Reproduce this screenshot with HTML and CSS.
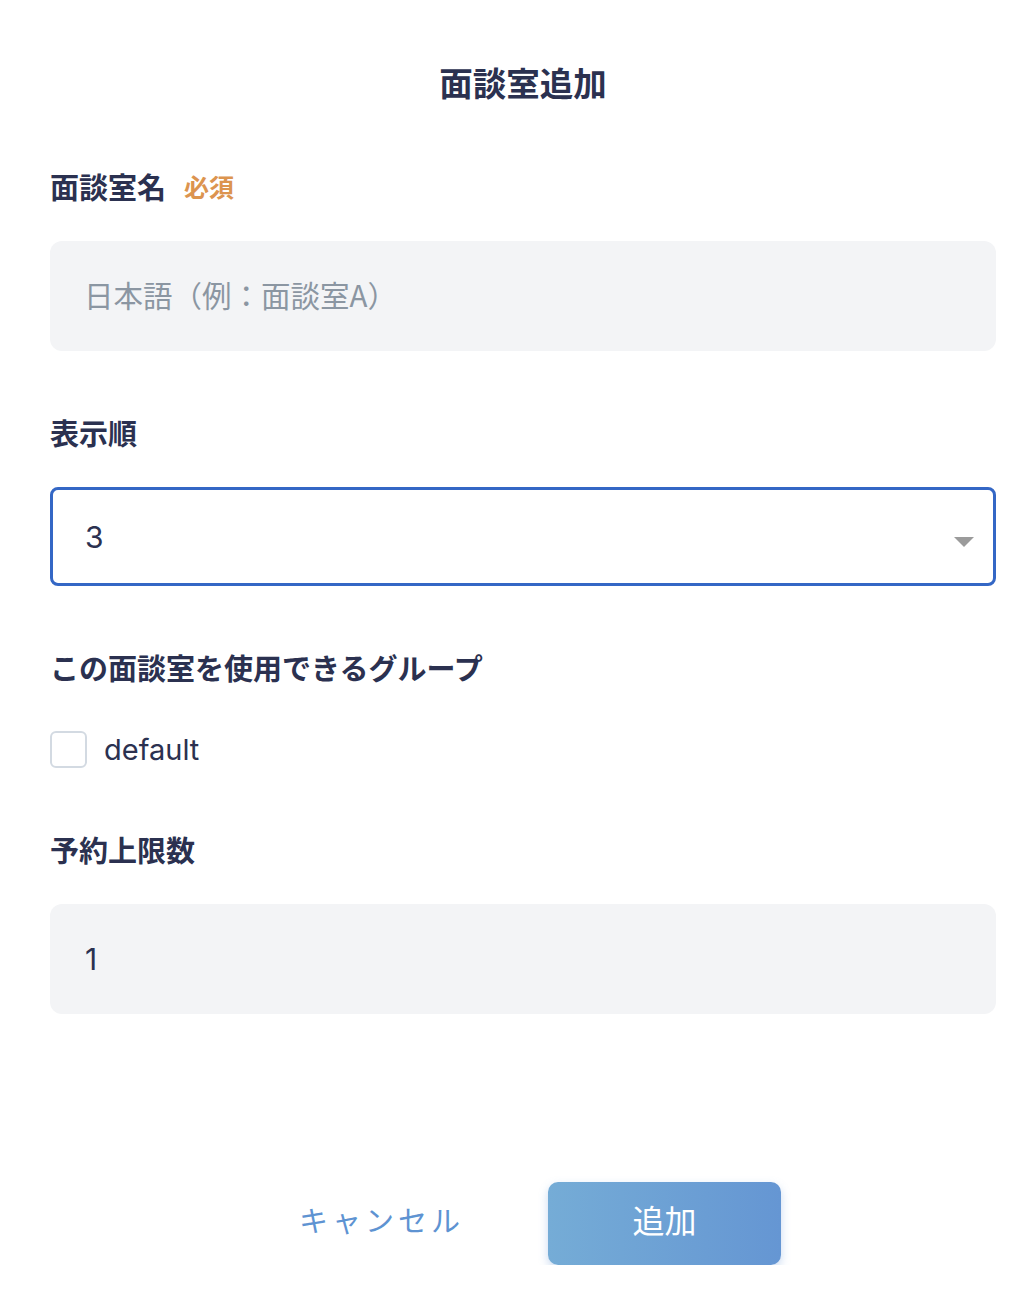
FILE: index.html
```html
<!DOCTYPE html>
<html lang="ja">
<head>
<meta charset="utf-8">
<title>面談室追加</title>
<link rel="stylesheet" href="styles.css">
</head>
<body>
<div class="dialog">
  <h1 class="title">面談室追加</h1>

  <div class="label label-first">面談室名<span class="required">必須</span></div>
  <div class="field field-filled">
    <span class="placeholder">日本語（例：面談室A）</span>
  </div>

  <div class="label">表示順</div>
  <div class="field field-select">
    <span class="value">3</span>
    <span class="arrow"></span>
  </div>

  <div class="label">この面談室を使用できるグループ</div>
  <div class="check-row">
    <span class="checkbox"></span>
    <span class="check-text">default</span>
  </div>

  <div class="label label-after-check">予約上限数</div>
  <div class="field field-filled">
    <span class="value">1</span>
  </div>

  <div class="actions">
    <button class="btn btn-cancel">キャンセル</button>
    <button class="btn btn-primary">追加</button>
  </div>
</div>
</body>
</html>
```

FILE: styles.css
```css
* { box-sizing: border-box; }

html, body {
  margin: 0;
  padding: 0;
  background: #ffffff;
}

body {
  font-family: "Inter", "Noto Sans CJK JP", sans-serif;
  color: #2b3150;
}

.dialog {
  width: 1034px;
  padding: 58px 38px 0 50px;
  display: flex;
  flex-direction: column;
}

.title {
  margin: 0;
  font-size: 33.5px;
  line-height: 48px;
  font-weight: 700;
  text-align: center;
  color: #2b3150;
  font-family: "Noto Sans CJK JP", sans-serif;
}

.label {
  font-family: "Noto Sans CJK JP", sans-serif;
  font-size: 29px;
  line-height: 40px;
  font-weight: 700;
  color: #2b3150;
  margin-top: 61px;
  margin-bottom: 35px;
  display: flex;
  align-items: center;
}

.label-first { margin-top: 60px; }
.label-after-check { margin-top: 60px; }

.required {
  font-size: 25px;
  color: #dc944f;
  margin-left: 18px;
  font-weight: 700;
}

.field {
  height: 110px;
  border-radius: 12px;
  display: flex;
  align-items: center;
  padding: 0 35px;
  position: relative;
}

.field-filled {
  background: #f3f4f6;
}

.placeholder {
  font-family: "Noto Sans CJK JP", sans-serif;
  font-size: 29.5px;
  color: #8b96a2;
  margin-left: -1px;
  padding-bottom: 5px;
}

.value {
  font-size: 30px;
  color: #2b3150;
}

.field-select {
  height: 99px;
  border: 3px solid #3467c5;
  border-radius: 8px;
  padding: 0 32px;
}

.arrow {
  position: absolute;
  right: 19px;
  top: 47px;
  width: 0;
  height: 0;
  border-left: 10px solid transparent;
  border-right: 10px solid transparent;
  border-top: 10px solid #9b9b9b;
}

.check-row {
  margin-top: 7px;
  height: 40px;
  display: flex;
  align-items: center;
}

.checkbox {
  width: 37px;
  height: 37px;
  border: 2px solid #d3dae2;
  border-radius: 6px;
  background: #fff;
}

.check-text {
  margin-left: 17px;
  font-size: 29px;
  color: #2b3150;
}

.actions {
  margin-top: 168px;
  display: flex;
  justify-content: center;
  gap: 50px;
}

.btn {
  width: 233px;
  height: 83px;
  border: none;
  border-radius: 10px;
  font-family: "Noto Sans CJK JP", sans-serif;
  cursor: pointer;
  padding: 0 0 10px 0;
}

.btn-cancel {
  background: transparent;
  color: #5e93d2;
  font-size: 29px;
  letter-spacing: 4px;
}

.btn-primary {
  background: linear-gradient(90deg, #75acd6 0%, #6596d3 100%);
  color: #ffffff;
  font-size: 32px;
  box-shadow: 0 4px 10px rgba(101, 150, 211, 0.35);
}
```
